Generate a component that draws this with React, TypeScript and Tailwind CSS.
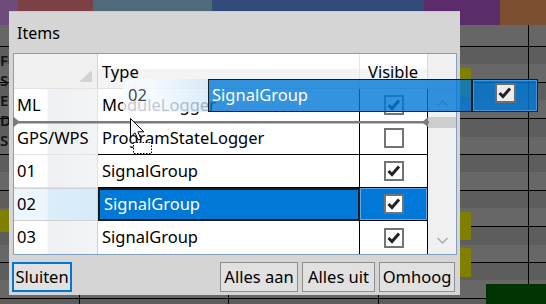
import type { ReactNode } from "react";

type Row = { id: string; type: string; visible: boolean; selected?: boolean };

const rows: Row[] = [
  { id: "ML", type: "ModuleLogger", visible: true },
  { id: "GPS/WPS", type: "ProgramStateLogger", visible: false },
  { id: "01", type: "SignalGroup", visible: true },
  { id: "02", type: "SignalGroup", visible: true, selected: true },
  { id: "03", type: "SignalGroup", visible: true },
];

function CheckBox({ checked }: { checked: boolean }) {
  return (
    <div className="w-[20px] h-[20px] border-2 border-[#737373] bg-white flex items-center justify-center">
      {checked && (
        <svg width="16" height="16" viewBox="0 0 16 16">
          <polyline points="2.5,8 6,11.5 13,3.5" fill="none" stroke="#222" strokeWidth="3" />
        </svg>
      )}
    </div>
  );
}

function Chevron({ up }: { up?: boolean }) {
  return (
    <svg width="11" height="7" viewBox="0 0 11 7">
      <polyline
        points={up ? "0.5,6 5.5,1 10.5,6" : "0.5,1 5.5,6 10.5,1"}
        fill="none"
        stroke="#a8a8a8"
        strokeWidth="1.4"
      />
    </svg>
  );
}

function Button({ children, w, focused }: { children: ReactNode; w: string; focused?: boolean }) {
  return (
    <div
      className={`${w} h-[30px] flex items-center justify-center bg-[#e1e1e1] ${
        focused ? "border-2 border-[#0078d7]" : "border border-[#8e8e8e]"
      }`}
    >
      {children}
    </div>
  );
}

function BgRow({ h, split }: { h: string; split?: boolean }) {
  return (
    <div
      className={`${h} flex border-t border-black ${
        split ? "bg-[linear-gradient(#5d5d5d_50%,#676767_50%)]" : "bg-[#666666]"
      }`}
    >
      <div className="w-[80px] border-r border-black" />
      <div className="w-[149px] border-r border-black" />
      <div className="w-[150px] border-r border-black" />
      <div className="w-[150px] border-r border-black" />
    </div>
  );
}

export default function App() {
  return (
    <div className="relative w-[546px] h-[304px] overflow-hidden bg-[#646464] text-black font-['Noto_Sans',sans-serif]">
      {/* application behind the dialog */}
      <div className="flex h-[25px]">
        <div className="w-[18px] bg-[#6d4c7b]" />
        <div className="w-[75px] bg-[#7b4146]" />
        <div className="w-[119px] bg-[#4f6b79]" />
        <div className="w-[212px] bg-[#334b7b]" />
        <div className="w-[76px] bg-[#5b2c6a]" />
        <div className="flex-1 bg-[#7b4f2f]" />
      </div>
      <div className="h-[21px] flex bg-[#666666]">
        <div className="w-[80px] border-r border-black" />
        <div className="w-[149px] border-r border-black" />
        <div className="w-[150px] border-r border-black" />
        <div className="w-[150px] border-r border-black" />
      </div>
      {Array.from({ length: 8 }).map((_, i) => (
        <BgRow key={i} h="h-[36px]" split />
      ))}

      <div className="absolute left-0 top-[50px] flex flex-col text-[15px] leading-[20px] font-semibold text-[#111]">
        <span>Fo</span>
        <span>St</span>
        <span>Ei</span>
        <span>D</span>
        <span>St</span>
      </div>
      <div className="absolute left-0 top-[210px] w-[10px] h-[22px] bg-[#808000]" />
      <div className="absolute left-[460px] top-[68px] w-[11px] h-[29px] bg-[#808000]" />
      <div className="absolute left-[460px] top-[212px] w-[11px] h-[28px] bg-[#808000]" />
      <div className="absolute left-[460px] top-[248px] w-[11px] h-[29px] bg-[#808000]" />
      <div className="absolute left-[486px] top-[284px] w-[60px] h-[20px] bg-[#003300]" />

      {/* dialog */}
      <div className="absolute left-[9px] top-[11px] w-[451px] h-[284px] bg-[#d5d5d5] border-t border-[#c4cad2] flex flex-col">
        <div className="h-[41px] flex items-center pl-2 text-[16px]">Items</div>

        <div className="ml-1 w-[444px] h-[202px] border border-[#82a0be] bg-white flex flex-col text-[16.5px]">
          {/* column headers */}
          <div className="h-[35px] flex border-b border-[#e2e2e2]">
            <div className="w-[84px] relative bg-[#f0f0f0] border-r border-[#d5d5d5]">
              <svg className="absolute right-[5px] bottom-[6px]" width="13" height="12" viewBox="0 0 13 12">
                <polygon points="13,0 13,12 0,12" fill="#d2d2d2" />
              </svg>
            </div>
            <div className="w-[262px] flex items-center pl-[4px] pt-[3px] bg-[linear-gradient(#ffffff_45%,#f3f4f6_45%)] border-r border-[#e5e5e5]">
              Type
            </div>
            <div className="w-[68px] flex items-center pl-[8px] pt-[3px] bg-[linear-gradient(#ffffff_45%,#f3f4f6_45%)] border-r border-[#d9d9d9]">
              Visible
            </div>
            <div className="flex-1 bg-[#f0f0f0]" />
          </div>

          {/* rows + scrollbar */}
          <div className="flex flex-1">
            <div className="w-[414px] flex flex-col">
              {rows.map((r, i) => {
                const last = i === rows.length - 1;
                return (
                  <div key={r.id} className="h-[33px] flex">
                    <div
                      className={`w-[84px] flex items-center pl-[3px] border-r border-[#d0d0d0] ${
                        r.selected
                          ? "bg-[linear-gradient(to_right,#edf6fd_40%,#dbedf9_41%,#d6eaf8)] border-y border-[#9fd0f0]"
                          : `bg-[linear-gradient(to_right,#ffffff_40%,#eef0f3_41%,#f3f4f6)] ${last ? "" : "border-b border-[#dfe4ea]"}`
                      }`}
                    >
                      {r.id}
                    </div>
                    <div
                      className={`w-[262px] flex items-center pl-[4px] ${
                        r.selected
                          ? "bg-[#0078d7] text-white border-2 border-[#1a1a1a]"
                          : `bg-white border-r border-black ${last ? "" : "border-b"}`
                      }`}
                    >
                      {r.type}
                    </div>
                    <div
                      className={`w-[68px] flex items-center justify-center border-r border-black ${
                        r.selected
                          ? "bg-[#0078d7] shadow-[inset_0_0_0_1px_#5aa8ee] border-b"
                          : `bg-white ${last ? "" : "border-b"}`
                      }`}
                    >
                      <CheckBox checked={r.visible} />
                    </div>
                  </div>
                );
              })}
            </div>
            <div className="flex-1 bg-[#f0f0f0] flex flex-col">
              <div className="h-[28px] flex items-center justify-center">
                <Chevron up />
              </div>
              <div className="h-[11px] bg-[#cdcdcd]" />
              <div className="flex-1" />
              <div className="h-[28px] flex items-center justify-center">
                <Chevron />
              </div>
            </div>
          </div>
        </div>

        <div className="mt-[7px] flex pl-[3px] pr-[5px] text-[16.5px]">
          <Button w="w-[60px]" focused>
            Sluiten
          </Button>
          <div className="flex-1" />
          <div className="flex gap-[4px]">
            <Button w="w-[78px]">Alles aan</Button>
            <Button w="w-[73px]">Alles uit</Button>
            <Button w="w-[76px]">Omhoog</Button>
          </div>
        </div>
      </div>

      {/* drop insertion marker */}
      <svg className="absolute left-[13px] top-[116px]" width="416" height="12" viewBox="0 0 416 12">
        <rect x="0" y="5" width="416" height="2.5" fill="#7b7b7b" />
        <polygon points="0,0.5 7,6 0,11.5" fill="#7b7b7b" />
        <polygon points="415,1 409,6.2 415,11" fill="#7b7b7b" />
      </svg>

      {/* dragged row ghost */}
      <div className="absolute left-[123px] top-[79px] w-[85px] h-[33px] flex items-center pl-[5px] text-[16.5px] text-[#1c2233]/85 bg-[linear-gradient(to_right,rgba(244,250,255,0.8)_35%,rgba(208,231,249,0.75))]">
        02
      </div>
      <div className="absolute left-[208px] top-[79px] w-[264px] h-[33px] flex items-center pl-[3px] text-[16.5px] text-white bg-[#0078d7]/80 border border-[#1c1c1c]">
        SignalGroup
      </div>
      <div className="absolute left-[472px] top-[79px] w-[66px] h-[33px] flex justify-center pt-[3px] bg-[#0078d7]/80 border border-[#1c1c1c] shadow-[inset_0_0_0_1px_#3d94e0]">
        <div className="w-[21px] h-[20px] border-2 border-[#6d6d6d] bg-[#ececec] flex items-center justify-center">
          <svg width="16" height="16" viewBox="0 0 16 16">
            <polyline points="2.5,8 6,11.5 13,3.5" fill="none" stroke="#222" strokeWidth="3" />
          </svg>
        </div>
      </div>

      {/* mouse pointer with drag box */}
      <svg className="absolute left-[129px] top-[117px]" width="26" height="40" viewBox="0 0 26 40">
        <path
          d="M1.5,1.5 L1.5,20 L6,15.8 L9.2,23 L12,21.8 L8.9,14.8 L14.8,14.8 Z"
          fill="white"
          stroke="black"
          strokeWidth="1"
          strokeLinejoin="miter"
        />
        <rect x="4.5" y="25.5" width="18" height="11" fill="white" stroke="black" strokeDasharray="1.5 1.5" />
      </svg>
    </div>
  );
}
